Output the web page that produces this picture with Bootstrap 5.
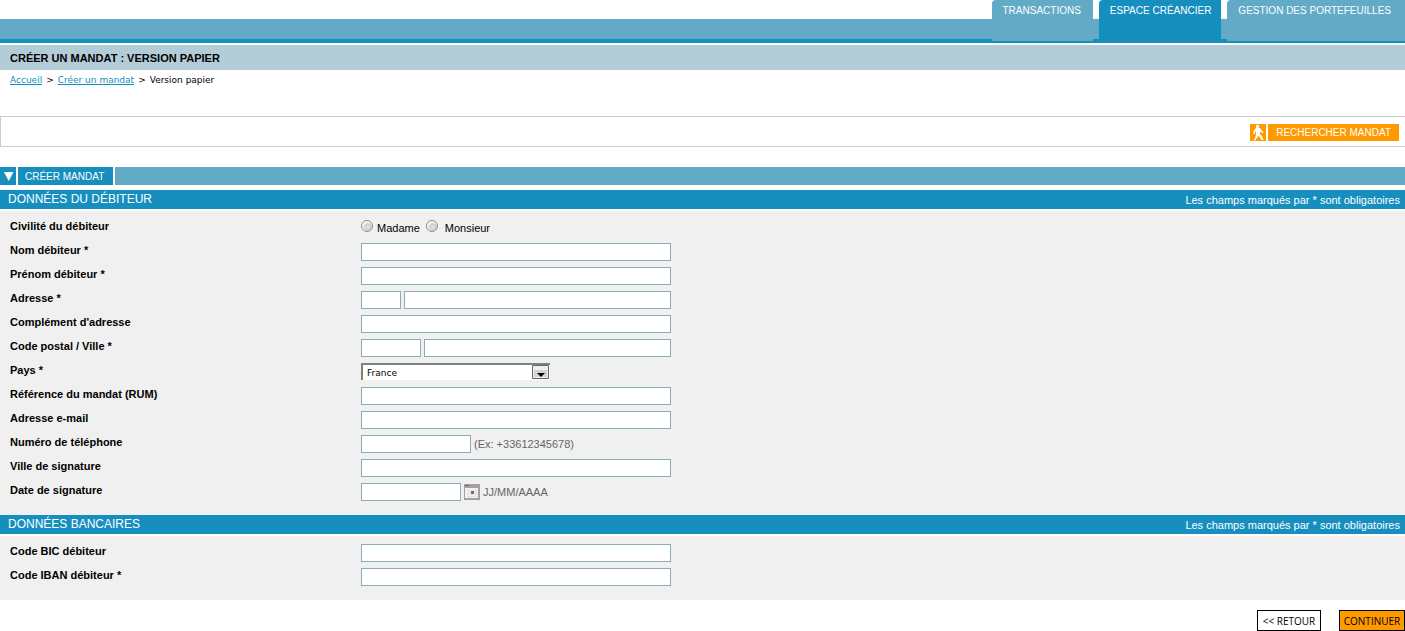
<!DOCTYPE html>
<html lang="fr">
<head>
<meta charset="utf-8">
<meta name="viewport" content="width=device-width, initial-scale=1">
<title>Créer un mandat : version papier</title>
<link href="https://cdn.jsdelivr.net/npm/bootstrap@5.3.0/dist/css/bootstrap.min.css" rel="stylesheet">
<style>
:root { --deep: #168fbf; --mid: #62aac6; --pale: #b3ccd8; --orange: #f90; }
body { font-family: "Liberation Sans", Arial, sans-serif; font-size: 11px; line-height: 14px; color: #000; background: #fff; }
.wide-face { font-family: "DejaVu Sans", Verdana, sans-serif; font-size: 9px; }
.topbar { height: 43px; background: linear-gradient(#fff 19px, var(--mid) 19px, var(--mid) 39px, var(--deep) 39px); }
.tabs { gap: 6px; }
.tabs .nav-link { height: 41px; padding: 4px 12px 4px 11px; font-size: 10px; background: var(--mid); color: #fff; border-top-left-radius: 4px; }
.tabs .nav-link.active { height: 43px; padding-right: 10px; background: var(--deep); }
.tabs .nav-link:last-child { padding-right: 14px; }
.page-title { margin: 2px 0 0; padding: 0 10px; font-size: 11px; line-height: 27px; height: 25px; font-weight: bold; background: var(--pale); }
.trail { padding: 3px 10px 0; height: 46px; gap: 4px; }
.trail a { color: var(--deep); }
.searchbox { height: 31px; border: 1px solid #ccc; border-right: 0; padding: 2px 6px 0 0; }
.btn-flat { border: 0; padding: 0; background: none; gap: 2px; color: #fff; font-size: 10px; }
.btn-flat span { background: var(--orange); padding: 0 8px; line-height: 17px; height: 17px; }
.foldbar { margin-top: 20px; height: 18px; gap: 2px; }
.foldbar .fold { width: 16px; border: 0; padding: 0; background: var(--deep); }
.foldbar .fold-title { padding: 0 9px 0 7px; margin: 0; font-size: 10px; line-height: 19px; font-weight: normal; color: #fff; background: var(--deep); }
.foldbar .fold-rest { background: var(--mid); }
.sections { padding-top: 5px; }
.section-head { height: 19px; padding: 0 5px 0 8px; background: var(--deep); color: #fff; line-height: 20px; }
.section-head h2 { font-size: 12px; line-height: 19px; font-weight: normal; margin: 0; }
.fields { margin-top: 2px; padding: 5px 10px 11px; background: #f0f0f0; }
.field-row { display: grid; grid-template-columns: 351px 1fr; height: 24px; }
.field-name { font-weight: bold; line-height: 20px; }
.controls { display: flex; gap: 3px; align-items: center; height: 24px; }
.civil { gap: 4px; }
.box { height: 18px; border: 1px solid #8aabb7; background: #fff; padding: 0 3px; font-size: 11px; border-radius: 0; }
.w-310 { width: 310px; } .w-267 { width: 267px; } .w-247 { width: 247px; } .w-110 { width: 110px; }
.w-100px { width: 100px; } .w-60 { width: 60px; } .w-40 { width: 40px; }
.hint { color: #666; }
.dot { appearance: none; width: 12px; height: 12px; margin: 0 0 4px; border: 1px solid #8c8c8c; border-radius: 50%; background: radial-gradient(circle at 60% 60%, #e8e8e8 0, #ccc 3px, #f8f8f8 5px); }
.dot:checked { background: radial-gradient(circle, #333 0, #333 2px, #f8f8f8 3px); }
.dot ~ .dot { margin-left: 2px; }
.dot ~ .dot + label { margin-left: 3px; }
.pick { position: relative; width: 189px; height: 18px; }
.pick select { display: block; appearance: none; width: 100%; height: 17px; padding: 1px 20px 0 4px; border: 0; border-top: 2px solid #808080; border-left: 2px solid #808080; border-radius: 0; background: #fff; color: #000; }
.pick svg { position: absolute; top: 2px; right: 1px; pointer-events: none; }
.cal { border: 0; padding: 0; background: none; width: 16px; height: 16px; }
svg { display: block; }
.actions { padding-top: 10px; gap: 18px; }
.act { min-width: 64px; height: 21px; border: 1px solid #000; padding: 0 3px; background: #fff; color: #000; font-family: "Open Sans", Tahoma, sans-serif; font-size: 10px; }
.act.go { min-width: 66px; background: var(--orange); }
</style>
<script src="https://cdn.jsdelivr.net/npm/bootstrap@5.3.0/dist/js/bootstrap.bundle.min.js"></script>
</head>
<body>
<header class="topbar">
  <nav class="nav tabs justify-content-end" aria-label="Rubriques">
    <a class="nav-link" href="#">TRANSACTIONS</a>
    <a class="nav-link active" href="#" aria-current="page">ESPACE CRÉANCIER</a>
    <a class="nav-link" href="#">GESTION DES PORTEFEUILLES</a>
  </nav>
</header>
<main>
  <h1 class="page-title">CRÉER UN MANDAT : VERSION PAPIER</h1>
  <nav class="trail wide-face d-flex" aria-label="Fil d'Ariane"><a href="#">Accueil</a><span>&gt;</span><a href="#">Créer un mandat</a><span>&gt;</span><span>Version papier</span></nav>

  <div class="searchbox d-flex justify-content-end align-items-center">
    <button type="button" class="btn-flat d-flex">
      <svg width="16" height="17" viewBox="0 0 16 17" aria-hidden="true"><path fill="#f90" d="M0 0h16v17H0z"/><path fill="#fff" d="M6 1h3v3h1l2 3 1.500 1-.5 1-2.500-1-.5-1v3l2 2 1.500 4h-2L9 12.500 8 12l-1 2-2 2.500H3.500L5.500 13 6 10V7L5 8v2H3.500V7L6 4z"/></svg>
      <span>RECHERCHER MANDAT</span>
    </button>
  </div>

  <div class="foldbar d-flex">
    <button type="button" class="fold" aria-label="Replier"><svg width="16" height="18" viewBox="0 0 16 18" aria-hidden="true"><path d="M4 5h9.500L8.700 14z" fill="#fff"/></svg></button>
    <h2 class="fold-title">CRÉER MANDAT</h2>
    <div class="fold-rest flex-grow-1"></div>
  </div>

  <form class="sections">
    <section>
      <div class="section-head d-flex justify-content-between"><h2>DONNÉES DU DÉBITEUR</h2><span>Les champs marqués par * sont obligatoires</span></div>
      <div class="fields">
        <div class="field-row" role="radiogroup" aria-labelledby="civ"><span class="field-name" id="civ">Civilité du débiteur</span>
          <div class="controls civil"><input class="dot" type="radio" name="civ" id="mme"><label for="mme">Madame</label><input class="dot" type="radio" name="civ" id="mr"><label for="mr">Monsieur</label></div></div>
        <div class="field-row"><label class="field-name" for="nom">Nom débiteur *</label><div class="controls"><input class="box w-310" id="nom" type="text"></div></div>
        <div class="field-row"><label class="field-name" for="prenom">Prénom débiteur *</label><div class="controls"><input class="box w-310" id="prenom" type="text"></div></div>
        <div class="field-row"><label class="field-name" for="num">Adresse *</label><div class="controls"><input class="box w-40" id="num" type="text"><input class="box w-267" type="text" aria-label="Rue"></div></div>
        <div class="field-row"><label class="field-name" for="compl">Complément d'adresse</label><div class="controls"><input class="box w-310" id="compl" type="text"></div></div>
        <div class="field-row"><label class="field-name" for="cp">Code postal / Ville *</label><div class="controls"><input class="box w-60" id="cp" type="text"><input class="box w-247" type="text" aria-label="Ville"></div></div>
        <div class="field-row"><label class="field-name" for="pays">Pays *</label><div class="controls"><div class="pick"><select id="pays" class="wide-face"><option>France</option></select><svg width="17" height="14" viewBox="0 0 17 14" aria-hidden="true"><path d="M.5.5h16v13H.5z" fill="#f0f0f0" stroke="#666"/><path d="M2 5h13v7H2z" fill="#d4d4d4"/><path d="M5 8h8l-4 4z"/></svg></div></div></div>
        <div class="field-row"><label class="field-name" for="rum">Référence du mandat (RUM)</label><div class="controls"><input class="box w-310" id="rum" type="text"></div></div>
        <div class="field-row"><label class="field-name" for="mail">Adresse e-mail</label><div class="controls"><input class="box w-310" id="mail" type="email"></div></div>
        <div class="field-row"><label class="field-name" for="tel">Numéro de téléphone</label><div class="controls"><input class="box w-110" id="tel" type="tel"><span class="hint">(Ex: +33612345678)</span></div></div>
        <div class="field-row"><label class="field-name" for="ville">Ville de signature</label><div class="controls"><input class="box w-310" id="ville" type="text"></div></div>
        <div class="field-row"><label class="field-name" for="date">Date de signature</label><div class="controls"><input class="box w-100px" id="date" type="text"><button type="button" class="cal" aria-label="Calendrier"><svg width="16" height="16" viewBox="0 0 16 16" aria-hidden="true"><path d="M0 0h16v16H0z" fill="#a3a0a1"/><path d="M1 4h13v10H1z" fill="#f2f2f2"/><path d="M3 6h10v7H3z" fill="#ddd"/><path d="M3 8h10M3 11h10M6 6v7M10 6v7" stroke="#f2f2f2"/><path d="M1 1h4v1H1z" fill="#945a6c"/><path d="M7 7h3v3H7z" fill="#945a6c"/></svg></button><span class="hint">JJ/MM/AAAA</span></div></div>
      </div>
    </section>
    <section>
      <div class="section-head d-flex justify-content-between"><h2>DONNÉES BANCAIRES</h2><span>Les champs marqués par * sont obligatoires</span></div>
      <div class="fields">
        <div class="field-row"><label class="field-name" for="bic">Code BIC débiteur</label><div class="controls"><input class="box w-310" id="bic" type="text"></div></div>
        <div class="field-row"><label class="field-name" for="iban">Code IBAN débiteur *</label><div class="controls"><input class="box w-310" id="iban" type="text"></div></div>
      </div>
    </section>
    <div class="actions d-flex justify-content-end">
      <button type="button" class="act">&lt;&lt; RETOUR</button>
      <button type="submit" class="act go">CONTINUER</button>
    </div>
  </form>
</main>
</body>
</html>
